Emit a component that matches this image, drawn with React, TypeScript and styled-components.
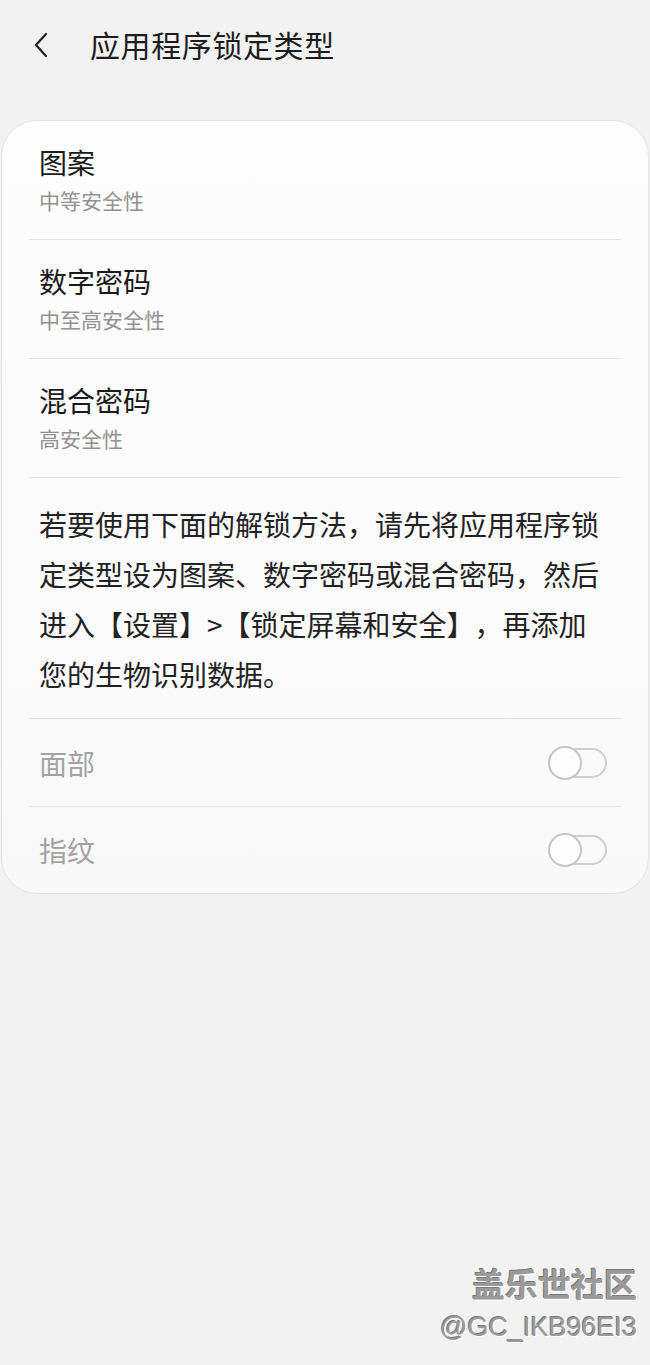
import React from "react";
import styled, { createGlobalStyle } from "styled-components";

const GlobalStyle = createGlobalStyle`
  html, body {
    margin: 0;
    padding: 0;
    background: #f2f2f2;
  }
  body {
    font-family: "Noto Sans CJK SC", "Noto Sans", sans-serif;
    color: #1a1a1a;
  }
`;

const lockTypes = [
  { title: "图案", desc: "中等安全性" },
  { title: "数字密码", desc: "中至高安全性" },
  { title: "混合密码", desc: "高安全性" },
];

const biometrics = ["面部", "指纹"];

export default function App() {
  return (
    <Page>
      <GlobalStyle />
      <Header>
        <BackButton>
          <svg width="18" height="28" viewBox="0 0 18 28">
            <path d="M14 3 L4 14 L14 25" fill="none" stroke="#222" strokeWidth="2.2" strokeLinecap="round" strokeLinejoin="round" />
          </svg>
        </BackButton>
        <Title>应用程序锁定类型</Title>
      </Header>
      <Card>
        {lockTypes.map((item) => (
          <OptionRow key={item.title}>
            <OptionTitle>{item.title}</OptionTitle>
            <OptionDesc>{item.desc}</OptionDesc>
          </OptionRow>
        ))}
        <Notice>
          若要使用下面的解锁方法，请先将应用程序锁定类型设为图案、数字密码或混合密码，然后进入【设置】&gt;【锁定屏幕和安全】，再添加
          <br />
          您的生物识别数据。
        </Notice>
        {biometrics.map((name, i) => (
          <SwitchRow key={name} last={i === biometrics.length - 1}>
            <SwitchLabel>{name}</SwitchLabel>
            <Toggle>
              <Thumb />
            </Toggle>
          </SwitchRow>
        ))}
      </Card>
      <Watermark>
        <div className="wm-title">盖乐世社区</div>
        <div className="wm-id">@GC_IKB96EI3</div>
      </Watermark>
    </Page>
  );
}

const Page = styled.div`
  position: relative;
  width: 650px;
  height: 1365px;
  overflow: hidden;
  background: #f2f2f2;
`;

const Header = styled.div`
  display: flex;
  align-items: center;
  height: 90px;
  padding-left: 32px;
  margin-bottom: 30px;
`;

const BackButton = styled.div`
  display: flex;
  align-items: center;
  width: 58px;
  height: 30px;
`;

const Title = styled.div`
  font-size: 30px;
  line-height: 40px;
  letter-spacing: 0.6px;
  color: #1c1c1c;
  margin-top: -2px;
`;

const Card = styled.div`
  margin: 0 1px;
  background: linear-gradient(#fdfdfd, #f9f9f9);
  border: 1px solid #e3e3e3;
  border-radius: 36px;
  padding: 0 27px;
`;

const OptionRow = styled.div`
  padding: 23px 10px 25px;
  border-bottom: 1px solid #e6e6e6;
`;

const OptionTitle = styled.div`
  font-size: 28px;
  line-height: 36px;
  color: #1a1a1a;
`;

const OptionDesc = styled.div`
  margin-top: 6px;
  font-size: 21px;
  line-height: 28px;
  color: #929292;
`;

const Notice = styled.div`
  padding: 21px 10px 19px;
  font-size: 28px;
  line-height: 50px;
  color: #222;
  text-spacing-trim: space-all;
  border-bottom: 1px solid #e6e6e6;
`;

const SwitchRow = styled.div<{ last: boolean }>`
  display: flex;
  align-items: center;
  justify-content: space-between;
  height: ${(p) => (p.last ? "86px" : "87px")};
  padding: 0 14px 0 10px;
  border-bottom: ${(p) => (p.last ? "none" : "1px solid #e6e6e6")};
`;

const SwitchLabel = styled.div`
  font-size: 28px;
  line-height: 36px;
  color: #a3a3a3;
`;

const Toggle = styled.div`
  position: relative;
  box-sizing: border-box;
  width: 59px;
  height: 30px;
  border: 2px solid #cfcfcf;
  border-radius: 15px;
`;

const Thumb = styled.div`
  position: absolute;
  left: -2px;
  top: -4px;
  box-sizing: border-box;
  width: 34px;
  height: 34px;
  border-radius: 50%;
  border: 2px solid #c6c6c6;
  background: #fdfdfd;
`;

const Watermark = styled.div`
  position: absolute;
  right: 13px;
  bottom: 18px;
  text-align: right;
  color: #9a9a9a;
  text-shadow: 1px 1px 0 #ffffff, -1px -1px 0 #7a7a7a;

  .wm-title {
    font-size: 33px;
    line-height: 40px;
    font-weight: 700;
  }
  .wm-id {
    font-family: "Liberation Sans", Arial, sans-serif;
    font-size: 27px;
    line-height: 40px;
    margin-top: 4px;
  }
`;
